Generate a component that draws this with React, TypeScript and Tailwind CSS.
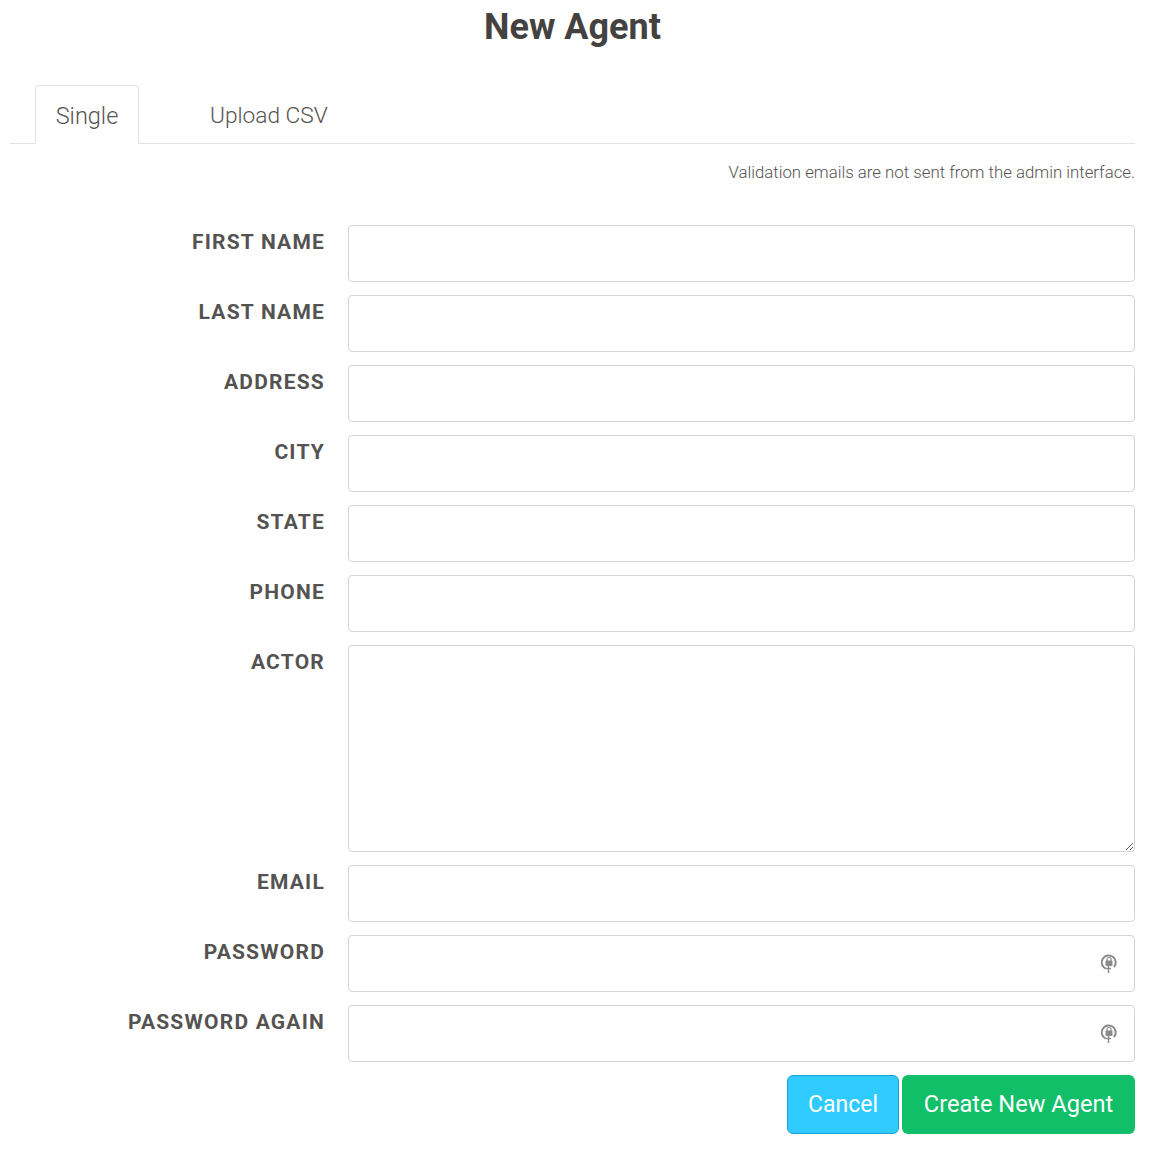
const fields = ['FIRST NAME', 'LAST NAME', 'ADDRESS', 'CITY', 'STATE', 'PHONE'];

function LockIcon() {
  return (
    <svg width="18" height="21" viewBox="0 0 18 21" className="absolute right-[17px] top-[18px] text-[#8a8a8a]" fill="none">
      <path d="M5.5 15.6A7 7 0 1 1 14 14" stroke="currentColor" strokeWidth="2" />
      <path d="M5.5 15.5H11M8.5 13V20" stroke="currentColor" strokeWidth="1.4" />
      <rect x="5.5" y="7.5" width="7" height="5.5" rx="1" fill="currentColor" />
      <path d="M7 8V6.5a2 2 0 0 1 4 0V8" stroke="currentColor" strokeWidth="1.2" />
    </svg>
  );
}

function Row({ label, children }: { label: string; children: React.ReactNode }) {
  return (
    <div className="flex mb-[13px]">
      <label className="w-[315px] text-right font-bold text-[21px] leading-[34px] tracking-[1.2px] text-[#555351]">
        {label}
      </label>
      <div className="ml-[23px] flex-1 relative">{children}</div>
    </div>
  );
}

const inputClass = 'block w-full h-[57px] border border-[#d4d4d4] rounded-[4px] bg-white';

export default function App() {
  return (
    <div className="w-[1158px] h-[1154px] bg-white font-['Roboto',sans-serif] text-[#555351] pl-[10px] pr-[23px]">
      <h1 className="text-center text-[36px] leading-[54px] font-bold text-[#444240]">New Agent</h1>

      <div className="mt-[31px] h-[59px] flex border-b border-[#e2e2e2] pl-[25px]">
        <div className="h-[59px] w-[104px] bg-white border border-[#e2e2e2] border-b-white rounded-t-[4px] text-center font-light text-[23.5px] leading-[60px]">
          Single
        </div>
        <div className="ml-[71px] font-light text-[22.7px] leading-[62px]">Upload CSV</div>
      </div>

      <p className="mt-[16px] text-right font-light text-[16.8px] leading-[24px]">
        Validation emails are not sent from the admin interface.
      </p>

      <form className="mt-[41px]">
        {fields.map((f) => (
          <Row key={f} label={f}>
            <input className={inputClass} />
          </Row>
        ))}
        <Row label="ACTOR">
          <textarea className="block w-full h-[207px] border border-[#d4d4d4] rounded-[4px] bg-white resize-y" />
        </Row>
        <Row label="EMAIL">
          <input className={inputClass} />
        </Row>
        <Row label="PASSWORD">
          <input type="password" className={inputClass} />
          <LockIcon />
        </Row>
        <Row label="PASSWORD AGAIN">
          <input type="password" className={inputClass} />
          <LockIcon />
        </Row>
        <div className="flex justify-end gap-[3px]">
          <button type="button" className="w-[112px] h-[59px] rounded-[6px] border border-[#1f9fd6] bg-[#2fcbff] text-white text-[23px] leading-[57px] pb-[2px]">
            Cancel
          </button>
          <button type="button" className="w-[233px] h-[59px] rounded-[6px] bg-[#11bf68] text-white text-[23.6px] leading-[59px]">
            Create New Agent
          </button>
        </div>
      </form>
    </div>
  );
}
